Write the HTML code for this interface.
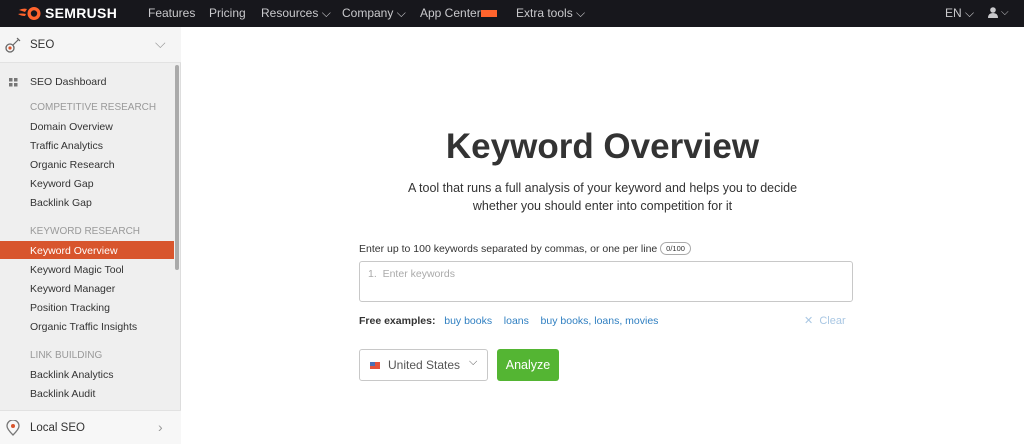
<!DOCTYPE html>
<html><head><meta charset="utf-8"><style>
*{margin:0;padding:0;box-sizing:border-box}
body{width:1024px;height:444px;overflow:hidden;font-family:"Liberation Sans",sans-serif;background:#fff;position:relative}
.top{position:absolute;left:0;top:0;width:1024px;height:27px;background:#17171c;color:#c9c9cc;font-size:12px}
.top span{position:absolute;top:6px}
.logo{position:absolute;left:18px;top:5px;color:#fff;font-weight:bold;font-size:14px;letter-spacing:.3px}
.side{position:absolute;left:0;top:27px;width:181px;height:417px;background:#efefef;border-right:1px solid #ddd}
.seo{position:absolute;left:0;top:0;width:181px;height:36px;background:#f5f5f5;border-bottom:1px solid #e2e2e2}
.it{position:absolute;left:30px;font-size:10.5px;color:#333}
.hd{position:absolute;left:30px;font-size:10px;color:#999}
.act{position:absolute;left:0;top:214px;width:174px;height:18px;background:#d8552d}
.sb{position:absolute;left:175px;top:38px;width:4px;height:205px;background:#aaa;border-radius:2px}
.loc{position:absolute;left:0;top:383px;width:181px;height:34px;background:#f7f7f7;border-top:1px solid #e2e2e2}
.main{position:absolute;left:181px;top:27px;right:0;bottom:0}
</style></head><body>
<div class="top">
<svg style="position:absolute;left:17px;top:6px" width="26" height="15" viewBox="0 0 26 15"><path d="M2 4 Q6 2 10 3 L8 6 Q5 5 2 4Z M1 8 Q5 7 9 8 L8 10 Q4 10 1 8Z" fill="#ff642d"/><circle cx="17" cy="7.5" r="6.5" fill="#ff642d"/><circle cx="17" cy="7.5" r="3.2" fill="#17171c"/></svg>
<div class="logo" style="left:45px">SEMRUSH</div>
<span style="left:148px">Features</span><span style="left:209px">Pricing</span>
<span style="left:261px">Resources ⌵</span><span style="left:342px">Company ⌵</span>
<span style="left:420px">App Center</span><div style="position:absolute;left:481px;top:10px;width:16px;height:7px;background:#ff642d"></div>
<span style="left:516px">Extra tools ⌵</span>
<span style="left:945px">EN ⌵</span>
<svg style="position:absolute;left:988px;top:7px" width="10" height="11" viewBox="0 0 10 11"><circle cx="5" cy="3" r="2.8" fill="#c9c9cc"/><path d="M0 11 Q0 6 5 6 Q10 6 10 11Z" fill="#c9c9cc"/></svg><span style="left:1001px;font-size:10px;top:7px">⌵</span>
</div>
<div class="side">
<div class="seo">
<svg style="position:absolute;left:4px;top:9px" width="18" height="18" viewBox="0 0 18 18"><circle cx="6" cy="12" r="4" fill="none" stroke="#666" stroke-width="1.3"/><circle cx="6" cy="12" r="1.6" fill="#d8552d"/><path d="M9 9 L15 3 M13 2 L16 5" stroke="#666" stroke-width="1.2"/></svg>
<div style="position:absolute;left:30px;top:12px;font-size:11.5px;color:#333">SEO</div>
<div style="position:absolute;left:155px;top:8px;font-size:14px;color:#999">⌵</div>
</div>
<svg style="position:absolute;left:9px;top:51px" width="9" height="9"><rect width="3.5" height="3.5" fill="#777"/><rect x="5" width="3.5" height="3.5" fill="#777"/><rect y="5" width="3.5" height="3.5" fill="#777"/><rect x="5" y="5" width="3.5" height="3.5" fill="#777"/></svg>
<div class="it" style="top:49px">SEO Dashboard</div>
<div class="hd" style="top:75px">COMPETITIVE RESEARCH</div>
<div class="it" style="top:94px">Domain Overview</div>
<div class="it" style="top:113px">Traffic Analytics</div>
<div class="it" style="top:132px">Organic Research</div>
<div class="it" style="top:151px">Keyword Gap</div>
<div class="it" style="top:170px">Backlink Gap</div>
<div class="hd" style="top:199px">KEYWORD RESEARCH</div>
<div class="act"></div>
<div class="it" style="top:218px;color:#fff">Keyword Overview</div>
<div class="it" style="top:237px">Keyword Magic Tool</div>
<div class="it" style="top:256px">Keyword Manager</div>
<div class="it" style="top:275px">Position Tracking</div>
<div class="it" style="top:294px">Organic Traffic Insights</div>
<div class="hd" style="top:323px">LINK BUILDING</div>
<div class="it" style="top:342px">Backlink Analytics</div>
<div class="it" style="top:361px">Backlink Audit</div>
<div class="sb"></div>
<div class="loc">
<svg style="position:absolute;left:6px;top:9px" width="14" height="16" viewBox="0 0 14 16"><path d="M7 15 Q1 9 1 6 A6 6 0 0 1 13 6 Q13 9 7 15Z" fill="none" stroke="#777" stroke-width="1.3"/><circle cx="7" cy="6" r="2" fill="#d8552d"/></svg>
<div style="position:absolute;left:30px;top:11px;font-size:11.5px;color:#333">Local SEO</div>
<div style="position:absolute;left:158px;top:8px;font-size:14px;color:#999">›</div>
</div>
</div>
<div class="main">
<div style="position:absolute;left:0;right:0;top:100px;text-align:center;font-size:35px;font-weight:bold;color:#333">Keyword Overview</div>
<div style="position:absolute;left:0;right:0;top:152px;text-align:center;font-size:12.5px;color:#333;line-height:18px">A tool that runs a full analysis of your keyword and helps you to decide<br>whether you should enter into competition for it</div>
<div style="position:absolute;left:178px;top:215px;font-size:10.5px;color:#333">Enter up to 100 keywords separated by commas, or one per line <span style="display:inline-block;border:1px solid #aaa;border-radius:7px;font-size:7.5px;padding:1px 5px;vertical-align:1px">0/100</span></div>
<div style="position:absolute;left:178px;top:234px;width:494px;height:41px;border:1px solid #c8c8c8;border-radius:3px;font-size:10.5px;color:#aaa;padding:6px 8px">1.&nbsp; Enter keywords</div>
<div style="position:absolute;left:178px;top:288px;font-size:10.5px;color:#333"><b>Free examples:</b>&nbsp;&nbsp;&nbsp;<span style="color:#2f7fc1">buy books&nbsp;&nbsp;&nbsp;&nbsp;loans&nbsp;&nbsp;&nbsp;&nbsp;buy books, loans, movies</span></div>
<div style="position:absolute;left:623px;top:287px;font-size:11px;color:#a9c7e3">✕&nbsp; Clear</div>
<div style="position:absolute;left:178px;top:322px;width:129px;height:32px;border:1px solid #c8c8c8;border-radius:3px;font-size:12px;color:#555">
<div style="position:absolute;left:10px;top:12px;width:10px;height:7px;background:#e4513b"><div style="width:5px;height:4px;background:#4a6fb5"></div></div>
<span style="position:absolute;left:28px;top:8px">United States</span><span style="position:absolute;left:109px;top:6px;font-size:11px">⌵</span></div>
<div style="position:absolute;left:316px;top:322px;width:62px;height:32px;background:#54b533;border-radius:3px;color:#fff;font-size:12.5px;text-align:center;line-height:32px">Analyze</div>
</div>
</body></html>
